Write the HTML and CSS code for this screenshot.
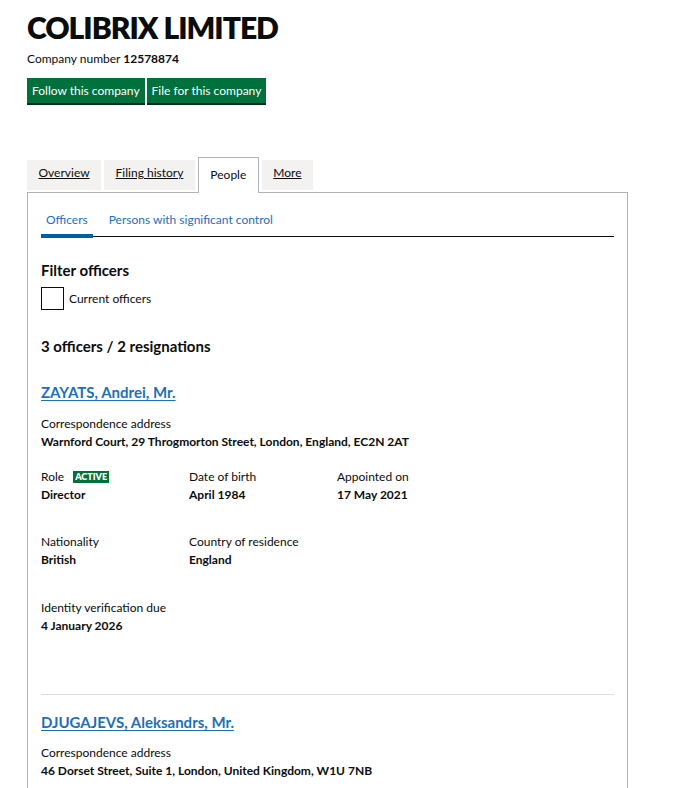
FILE: index.html
```html
<!DOCTYPE html>
<html lang="en">
<head>
<meta charset="utf-8">
<title>COLIBRIX LIMITED - People</title>
<link rel="stylesheet" href="styles.css">
</head>
<body>
<main class="page">
  <h1 class="company-name">COLIBRIX LIMITED</h1>
  <p class="company-number">Company number <strong>12578874</strong></p>
  <div class="actions">
    <a class="button" href="#">Follow this company</a>
    <a class="button" href="#">File for this company</a>
  </div>

  <nav class="tabs">
    <a class="tab" href="#">Overview</a>
    <a class="tab" href="#">Filing history</a>
    <span class="tab tab-selected">People</span>
    <a class="tab" href="#">More</a>
  </nav>

  <section class="panel">
    <nav class="subtabs">
      <a class="subtab subtab-active" href="#">Officers</a>
      <a class="subtab" href="#">Persons with significant control</a>
    </nav>

    <h2 class="filter-title">Filter officers</h2>
    <label class="check">
      <span class="check-box"></span>
      <span class="check-label">Current officers</span>
    </label>

    <h2 class="count">3 officers / 2 resignations</h2>

    <div class="officer">
      <h2 class="officer-name"><a href="#">ZAYATS, Andrei, Mr.</a></h2>
      <dl class="field">
        <dt>Correspondence address</dt>
        <dd>Warnford Court, 29 Throgmorton Street, London, England, EC2N 2AT</dd>
      </dl>
      <div class="grid">
        <dl class="field">
          <dt>Role <span class="badge">ACTIVE</span></dt>
          <dd>Director</dd>
        </dl>
        <dl class="field">
          <dt>Date of birth</dt>
          <dd>April 1984</dd>
        </dl>
        <dl class="field">
          <dt>Appointed on</dt>
          <dd>17 May 2021</dd>
        </dl>
      </div>
      <div class="grid grid-row2">
        <dl class="field">
          <dt>Nationality</dt>
          <dd>British</dd>
        </dl>
        <dl class="field">
          <dt>Country of residence</dt>
          <dd>England</dd>
        </dl>
      </div>
      <dl class="field field-idv">
        <dt>Identity verification due</dt>
        <dd>4 January 2026</dd>
      </dl>
    </div>

    <div class="officer officer-next">
      <h2 class="officer-name"><a href="#">DJUGAJEVS, Aleksandrs, Mr.</a></h2>
      <dl class="field">
        <dt>Correspondence address</dt>
        <dd>46 Dorset Street, Suite 1, London, United Kingdom, W1U 7NB</dd>
      </dl>
    </div>
  </section>
</main>
</body>
</html>
```

FILE: styles.css
```css
* { box-sizing: border-box; }
html, body { margin: 0; padding: 0; background: #ffffff; }
body {
  font-family: Lato, "Noto Sans", Arial, sans-serif;
  color: #0b0c0c;
  font-size: 12px;
}
.page { padding: 10px 27px 0 27px; width: 628px; }

.company-name {
  margin: 0;
  font-size: 30px;
  font-weight: 800;
  line-height: 34px;
  letter-spacing: -1px;
}
.company-number { margin: 7px 0 0; line-height: 16px; font-size: 12px; }
.company-number strong { font-weight: 700; }

.actions { display: flex; gap: 2px; margin-top: 11px; }
.button {
  display: block;
  background: #00703c;
  color: #ffffff;
  text-decoration: none;
  font-size: 12px;
  line-height: 16px;
  padding: 5px 5px 4px;
  box-shadow: 0 2px 0 #002d18;
  height: 25px;
}

.tabs { display: flex; align-items: flex-end; gap: 3px; margin-top: 54px; }
.tab {
  display: block;
  background: #f3f2f1;
  color: #0b0c0c;
  font-size: 12px;
  line-height: 16px;
  padding: 5px 11.5px 9px;
  text-decoration: underline;
  margin-bottom: 2px;
  height: 30px;
}
.tab-selected {
  background: #ffffff;
  border: 1px solid #b1b4b6;
  border-bottom: 0;
  text-decoration: none;
  padding: 9px 11.5px 9px;
  height: 36px;
  margin-bottom: -1px;
  position: relative;
}

.panel {
  border: 1px solid #b1b4b6;
  padding: 17px 13px 40px 13px;
  width: 601px;
}

.subtabs {
  display: flex;
  border-bottom: 1px solid #0b0c0c;
  height: 27px;
}
.subtab {
  color: #1d70b8;
  text-decoration: none;
  font-size: 12px;
  line-height: 16px;
  padding: 2px 5px 0;
  margin-right: 14px;
}
.subtab-active { border-bottom: 4px solid #005ea5; height: 28px; margin-bottom: -1px; margin-right: 11px; }

.filter-title { margin: 24px 0 0; font-size: 15px; line-height: 18px; font-weight: 700; }
.check { display: flex; align-items: center; gap: 5px; margin-top: 8px; }
.check-box { width: 23px; height: 23px; border: 1.5px solid #0b0c0c; display: block; }
.check-label { font-size: 12px; }

.count { margin: 26px 0 0; font-size: 15px; line-height: 20px; font-weight: 700; }

.officer-name { margin: 26px 0 0; font-size: 15px; line-height: 20px; font-weight: 700; }
.officer-name a { color: #1d70b8; text-decoration: underline; text-underline-offset: 2px; }

.field { margin: 0; }
.field dt { font-size: 12px; line-height: 18px; }
.field dd { margin: 0; font-size: 12px; line-height: 18px; font-weight: 700; }
.officer .field { margin-top: 13px; }

.grid { display: grid; grid-template-columns: 148px 148px 148px; margin-top: 17px; }
.officer .grid .field { margin-top: 0; }
.grid-row2 { margin-top: 29px; }
.officer .field-idv { margin-top: 30px; }

.badge {
  display: inline-block;
  background: #00703c;
  color: #ffffff;
  font-size: 9px;
  line-height: 12px;
  font-weight: 800;
  padding: 0 2px;
  margin-left: 6px;
  vertical-align: 1px;
}

.officer-next { border-top: 1px solid #dddddd; margin-top: 59px; }
.officer-next .officer-name { margin-top: 17px; }
.officer-next .field { margin-top: 12px; }
```
